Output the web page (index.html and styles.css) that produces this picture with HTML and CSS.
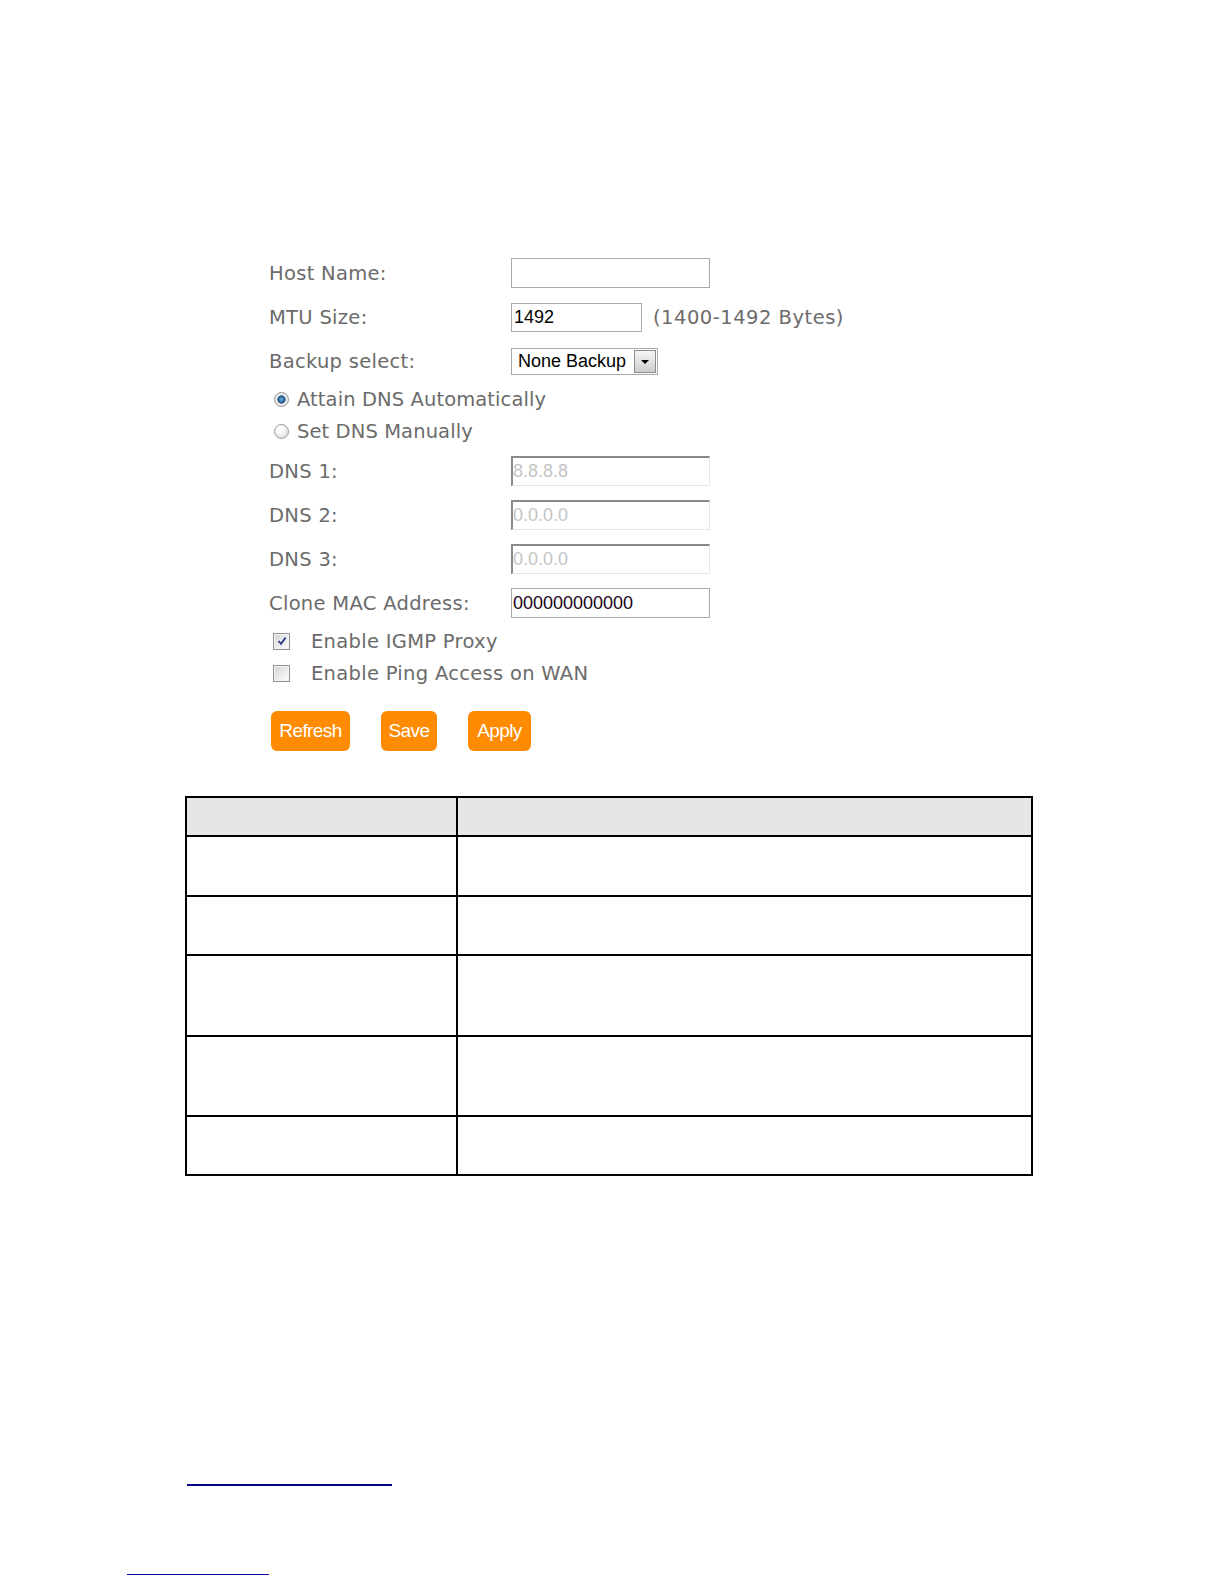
FILE: index.html
```html
<!DOCTYPE html>
<html lang="en">
<head>
    <meta charset="UTF-8">
    <meta name="viewport" content="width=device-width, initial-scale=1.0">
    <title>WAN Settings</title>
    <link rel="stylesheet" href="styles.css">
</head>
<body>
    <div id="page">
        <!-- WAN settings form -->
        <form class="wan-form">
            <div class="row">
                <label class="field-label" for="host">Host Name:</label>
                <input type="text" id="host" class="text-input">
            </div>
            <div class="row">
                <label class="field-label" for="mtu">MTU Size:</label>
                <input type="text" id="mtu" class="text-input short" value="1492">
                <span class="hint">(1400-1492 Bytes)</span>
            </div>
            <div class="row">
                <label class="field-label">Backup select:</label>
                <div class="select-box">
                    <span class="select-value">None Backup</span>
                    <span class="select-arrow"></span>
                </div>
            </div>

            <div class="row option-row">
                <span class="radio checked"></span>
                <span class="option-text">Attain DNS Automatically</span>
            </div>
            <div class="row option-row">
                <span class="radio"></span>
                <span class="option-text">Set DNS Manually</span>
            </div>

            <div class="row dns-first">
                <label class="field-label">DNS 1:</label>
                <input type="text" class="text-input disabled" value="8.8.8.8" disabled>
            </div>
            <div class="row">
                <label class="field-label">DNS 2:</label>
                <input type="text" class="text-input disabled" value="0.0.0.0" disabled>
            </div>
            <div class="row">
                <label class="field-label">DNS 3:</label>
                <input type="text" class="text-input disabled" value="0.0.0.0" disabled>
            </div>
            <div class="row">
                <label class="field-label" for="mac">Clone MAC Address:</label>
                <input type="text" id="mac" class="text-input mac" value="000000000000">
            </div>

            <div class="row option-row">
                <span class="checkbox">
                    <svg width="10" height="10" viewBox="0 0 10 10"><path d="M1.5 5 L4 7.8 L8.6 1.6" fill="none" stroke="#2c3a8e" stroke-width="1.8"/></svg>
                </span>
                <span class="check-text">Enable IGMP Proxy</span>
            </div>
            <div class="row option-row">
                <span class="checkbox"></span>
                <span class="check-text">Enable Ping Access on WAN</span>
            </div>

            <div class="buttons">
                <button type="button" class="btn btn-refresh">Refresh</button>
                <button type="button" class="btn btn-save">Save</button>
                <button type="button" class="btn btn-apply">Apply</button>
            </div>
        </form>

        <!-- Parameter table -->
        <table class="param-table">
            <tr class="head"><th class="col-name"></th><th></th></tr>
            <tr class="r1"><td></td><td></td></tr>
            <tr class="r2"><td></td><td></td></tr>
            <tr class="r3"><td></td><td></td></tr>
            <tr class="r4"><td></td><td></td></tr>
            <tr class="r5"><td></td><td></td></tr>
        </table>

        <div class="link-line first"></div>
        <div class="link-line second"></div>
    </div>
</body>
</html>
```

FILE: styles.css
```css
body {
    margin: 0;
    background-color: #ffffff;
    font-family: "DejaVu Sans", Verdana, sans-serif;
}

#page {
    width: 1224px;
    padding-top: 251px;
}

.wan-form {
    margin: 0 0 0 269px;
    color: #6b6b6b;
    font-size: 19.5px;
    letter-spacing: 0.3px;
}

.row {
    display: flex;
    align-items: center;
    height: 44px;
}

.option-row {
    height: 32px;
}

.option-text {
    letter-spacing: 0.1px;
}

.dns-first {
    margin-top: 2px;
}

.field-label {
    width: 242px;
    flex-shrink: 0;
}

.text-input {
    box-sizing: border-box;
    width: 199px;
    height: 30px;
    margin: 0;
    padding: 0 2px;
    border: 1px solid #a9a9a9;
    background: #ffffff;
    font-family: "Liberation Sans", Arial, sans-serif;
    font-size: 18px;
    letter-spacing: 0;
    color: #000;
}

.text-input.short {
    width: 131px;
    height: 29px;
}

.text-input.mac {
    color: #1a001a;
    padding-left: 1px;
}

.text-input.disabled {
    padding-left: 0;
    border-width: 2px 1px 1px 2px;
    border-style: solid;
    border-color: #8a8a8a #e6e6e6 #e6e6e6 #8a8a8a;
    color: #c4c4c4;
}

.hint {
    margin-left: 11px;
    letter-spacing: 0.5px;
}

.select-box {
    box-sizing: border-box;
    display: flex;
    align-items: center;
    justify-content: space-between;
    width: 147px;
    height: 27px;
    padding: 0 1px 0 6px;
    border: 1px solid #a9a9a9;
    font-family: "Liberation Sans", Arial, sans-serif;
    font-size: 18px;
    letter-spacing: 0;
    color: #000;
}

.select-arrow {
    position: relative;
    box-sizing: border-box;
    width: 22px;
    height: 23px;
    border: 1px solid #8c8c8c;
    background: linear-gradient(#f6f6f6, #cdcdcd);
}

.select-arrow::after {
    content: "";
    position: absolute;
    left: 6px;
    top: 9px;
    border-left: 4px solid transparent;
    border-right: 4px solid transparent;
    border-top: 4px solid #000;
}

.radio {
    box-sizing: border-box;
    width: 15px;
    height: 15px;
    margin: 0 8px 0 5px;
    border: 1px solid #9a9a9a;
    border-radius: 50%;
    background: radial-gradient(circle at 40% 35%, #ffffff 20%, #d4d4d4 90%);
}

.radio.checked {
    background: radial-gradient(circle, #6fb4e4 0, #1f5f98 34%, #3d4e66 42%, #f2f2f2 48%, #c9c9c9 100%);
}

.checkbox {
    box-sizing: border-box;
    display: flex;
    align-items: center;
    justify-content: center;
    width: 17px;
    height: 17px;
    margin: 0 21px 0 4px;
    border: 1px solid #8e8f8f;
    box-shadow: inset 0 0 0 1px #f4f4f4;
    background: linear-gradient(135deg, #d6d6d6, #fdfdfd);
}

.buttons {
    display: flex;
    gap: 31px;
    margin: 22px 0 0 2px;
}

.btn {
    height: 40px;
    padding: 0;
    border: none;
    border-radius: 6px;
    background-color: #fe8b02;
    color: #ffffff;
    font-family: "Liberation Sans", Arial, sans-serif;
    font-size: 19px;
    letter-spacing: -0.6px;
}

.btn-refresh {
    width: 79px;
}

.btn-save {
    width: 56px;
}

.btn-apply {
    width: 63px;
}

.param-table {
    width: 848px;
    margin: 45px 0 0 185px;
    border-collapse: collapse;
}

.param-table th,
.param-table td {
    padding: 0;
    border: 2px solid #000;
}

.param-table .head {
    height: 39px;
    background-color: #e6e6e6;
}

.param-table .col-name {
    width: 269px;
}

.r1 { height: 60px; }
.r2 { height: 59px; }
.r3 { height: 81px; }
.r4 { height: 80px; }
.r5 { height: 59px; }

.link-line {
    background-color: #000080;
}

.link-line.first {
    width: 205px;
    height: 2px;
    margin: 308px 0 0 187px;
}

.link-line.second {
    width: 142px;
    height: 1px;
    margin: 88px 0 0 127px;
    background-color: #0a0a9a;
}
```
